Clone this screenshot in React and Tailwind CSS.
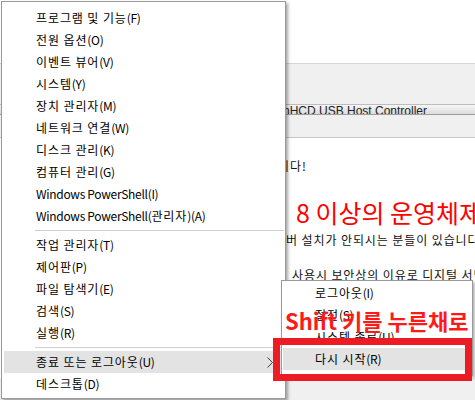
const mainItems = [
    ['프로그램 및 기능(F)'],
    ['전원 옵션(O)'],
    ['이벤트 뷰어(V)'],
    ['시스템(Y)'],
    ['장치 관리자(M)'],
    ['네트워크 연결(W)'],
    ['디스크 관리(K)'],
    ['컴퓨터 관리(G)'],
    ['Windows PowerShell(I)'],
    ['Windows PowerShell(관리자)(A)'],
    null,
    ['작업 관리자(T)'],
    ['제어판(P)'],
    ['파일 탐색기(E)'],
    ['검색(S)'],
    ['실행(R)'],
    null,
    ['종료 또는 로그아웃(U)', 'sub'],
    ['데스크톱(D)'],
];

const subItems = ['로그아웃(I)', '절전(S)', '시스템 종료(U)', '다시 시작(R)'];

// Malgun Gothic sets Hangul a bit looser and Latin a bit tighter than Noto CJK
const Label = ({ text }) => {
    const runs = text.match(/[\uAC00-\uD7A3 ]+|[^\uAC00-\uD7A3 ]+/g) || [];
    return (
        <span>
            {runs.map((r, i) =>
                /[\uAC00-\uD7A3]/.test(r) ? (
                    <span key={i} className="tracking-[0.9px]">{r}</span>
                ) : (
                    <span key={i} className="tracking-[-0.3px]">{r}</span>
                )
            )}
        </span>
    );
};

const Chevron = () => (
    <svg width="6" height="11" viewBox="0 0 6 11" className="block">
        <polyline points="0.5,0.5 5.5,5.5 0.5,10.5" fill="none" stroke="#3a3a3a" strokeWidth="1" />
    </svg>
);

const App = () => {
    return (
        <div className="relative w-[475px] h-[400px] overflow-hidden bg-white font-['Noto_Sans_CJK_KR',sans-serif] text-black">
            {/* page behind the menu */}
            <div className="flex flex-col h-full">
                <div className="h-[64px] bg-white border-b border-[#d6d6d6]" />
                <div className="h-[74px] bg-[#f0f0f0] pt-[40px] border-b border-[#c9c9c9]">
                    <div className="h-[11px] border-t border-b border-t-[#bdbdbd] border-b-[#9c9c9c] bg-gradient-to-b from-[#f6f6f6] to-[#dcdcdc] pl-[283px] text-[12px] leading-[13px] overflow-hidden whitespace-nowrap text-[#222] font-['Liberation_Sans',sans-serif]">
                        nHCD USB Host Controller
                    </div>
                </div>
                <div className="flex-1 bg-white pl-[278px] pt-[20px] overflow-hidden whitespace-nowrap">
                    <div className="text-[12px] leading-[16px] text-[#111] tracking-[0.9px]">니다!</div>
                    <div className="mt-[23px] pl-[18px] text-[25px] leading-[30px] text-[#ff0000]">8 이상의 운영체제에서</div>
                    <div className="mt-[5px] pl-[8px] text-[12px] leading-[16px] text-[#111] tracking-[0.9px]">버 설치가 안되시는 분들이 있습니다</div>
                    <div className="mt-[19px] pl-[14px] text-[12px] leading-[16px] text-[#111] tracking-[0.9px]">사용시 보안상의 이유로 디지털 서명이</div>
                </div>
                <div className="h-[22px] bg-[#f0f0f0]" />
            </div>

            {/* Win+X menu */}
            <div className="absolute left-[1px] top-[1px] w-[285px] h-[398px] border border-[#9a9a9a] bg-white pt-[5px] shadow-[2px_2px_3px_rgba(0,0,0,0.35)]">
                {mainItems.map((item, i) =>
                    item === null ? (
                        <div key={i} className="h-[7px] pt-[3px]">
                            <div className="ml-[33px] mr-[1px] h-px bg-[#d0d0d0]" />
                        </div>
                    ) : (
                        <div
                            key={i}
                            className={`mx-[2px] h-[22px] flex items-center justify-between pl-[32px] pr-[10px] text-[12px] leading-[22px] whitespace-nowrap ${item[1] ? 'bg-[#e3e3e3]' : ''}`}
                        >
                            <Label text={item[0]} />
                            {item[1] && <Chevron />}
                        </div>
                    )
                )}
            </div>

            {/* shutdown submenu */}
            <div className="absolute left-[281px] top-[280px] w-[192px] h-[96px] border border-[#9a9a9a] bg-white pt-[1px] shadow-[2px_2px_3px_rgba(0,0,0,0.3)]">
                {subItems.map((label, i) => (
                    <div
                        key={label}
                        className={`mx-[1px] h-[22px] pl-[32px] text-[12px] leading-[22px] whitespace-nowrap ${i === 3 ? 'bg-[#e3e3e3]' : ''}`}
                    >
                        <Label text={label} />
                    </div>
                ))}
            </div>

            {/* annotation */}
            <div className="absolute left-[285px] top-[305px] text-[22px] leading-[30px] font-bold text-[#ff1a1a] whitespace-nowrap">
                Shift 키를 누른채로
            </div>
            <div className="absolute left-[273px] top-[338px] w-[199px] h-[43px] border-[7px] border-[#ed1c24]" />
        </div>
    );
};

export default App;
